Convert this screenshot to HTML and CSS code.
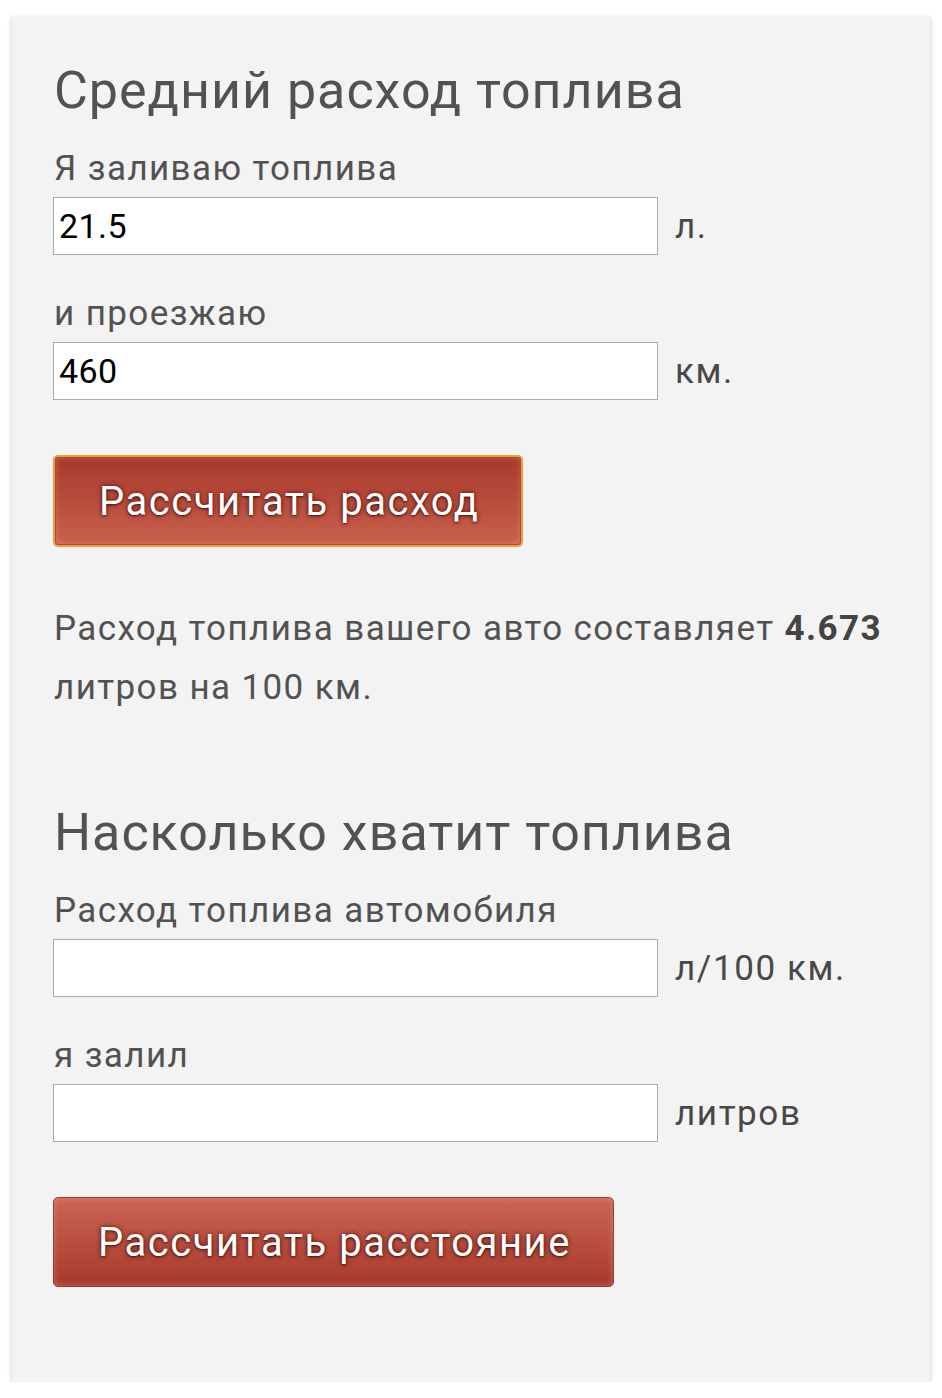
FILE: index.html
```html
<!DOCTYPE html>
<html lang="ru">

<head>
    <meta charset="UTF-8">
    <meta name="viewport" content="width=device-width, initial-scale=1.0">
    <title>Расход топлива</title>
    <link rel="stylesheet" href="styles.css">
</head>

<body>
    <div class="card">
        <section class="calc">
            <h2>Средний расход топлива</h2>
            <label class="label" for="fuel">Я заливаю топлива</label>
            <div class="row">
                <input type="text" id="fuel" class="field" value="21.5">
                <span class="unit">л.</span>
            </div>
            <label class="label" for="dist">и проезжаю</label>
            <div class="row">
                <input type="text" id="dist" class="field" value="460">
                <span class="unit">км.</span>
            </div>
            <button class="btn btn-focus">Рассчитать расход</button>
            <p class="result">Расход топлива вашего авто составляет <b>4.673</b> литров на 100 км.</p>
        </section>

        <section class="calc calc-second">
            <h2>Насколько хватит топлива</h2>
            <label class="label" for="rate">Расход топлива автомобиля</label>
            <div class="row">
                <input type="text" id="rate" class="field" value="">
                <span class="unit">л/100 км.</span>
            </div>
            <label class="label" for="filled">я залил</label>
            <div class="row">
                <input type="text" id="filled" class="field" value="">
                <span class="unit">литров</span>
            </div>
            <button class="btn btn-plain">Рассчитать расстояние</button>
        </section>
    </div>
</body>

</html>
```

FILE: styles.css
```css
* {
    padding: 0;
    margin: 0;
    box-sizing: border-box;
}

body {
    background-color: #ffffff;
    font-family: Roboto, "Noto Sans", sans-serif;
    color: #555555;
    padding: 16px 12px 0;
}

.card {
    width: 918px;
    height: 1366px;
    background-color: #f3f3f3;
    box-shadow: 0 2px 5px rgba(0, 0, 0, 0.22);
    padding: 44px 41px 0;
}

.calc {
    display: flex;
    flex-direction: column;
    align-items: flex-start;
}

.calc-second {
    margin-top: 85px;
}

h2 {
    font-size: 52px;
    line-height: 62px;
    font-weight: 400;
    letter-spacing: 1px;
    color: #525252;
    margin-bottom: 27px;
    padding-left: 1px;
}

.label {
    font-size: 35px;
    line-height: 40px;
    letter-spacing: 1.4px;
    color: #525252;
    margin-bottom: 8px;
    padding-left: 1px;
}

.row {
    display: flex;
    align-items: center;
    gap: 17px;
    margin-bottom: 39px;
}

.field {
    width: 605px;
    height: 58px;
    border: 1px solid #aaaaaa;
    background-color: #ffffff;
    font-family: Roboto, "Noto Sans", sans-serif;
    font-size: 34px;
    letter-spacing: 0.4px;
    color: #000000;
    padding: 0 5px;
    outline: none;
}

.unit {
    font-size: 35px;
    letter-spacing: 1.6px;
    color: #484848;
}

.btn {
    margin-top: 16px;
    height: 92px;
    padding: 0 42px 0 44px;
    font-family: Roboto, "Noto Sans", sans-serif;
    font-size: 40px;
    letter-spacing: 1.5px;
    color: #ffffff;
    text-shadow: 0 0 5px rgba(70, 0, 0, 0.85), 0 1px 2px rgba(0, 0, 0, 0.5);
    border-radius: 5px;
    cursor: pointer;
}

.btn-focus {
    border: 2px solid #e6a12e;
    background: linear-gradient(#a8392a, #c9614f);
    box-shadow: inset 0 0 0 1px #b5483a, inset 0 0 6px rgba(255, 255, 255, 0.25);
}

.btn-plain {
    height: 90px;
    border: 1px solid #9c3d30;
    background: linear-gradient(#ca6454, #a8392a);
    box-shadow: inset 0 0 6px rgba(255, 255, 255, 0.25);
}

.result {
    margin-top: 52px;
    font-size: 35px;
    line-height: 59px;
    letter-spacing: 1.4px;
    color: #525252;
    padding-left: 1px;
}

.result b {
    color: #444444;
}
```
